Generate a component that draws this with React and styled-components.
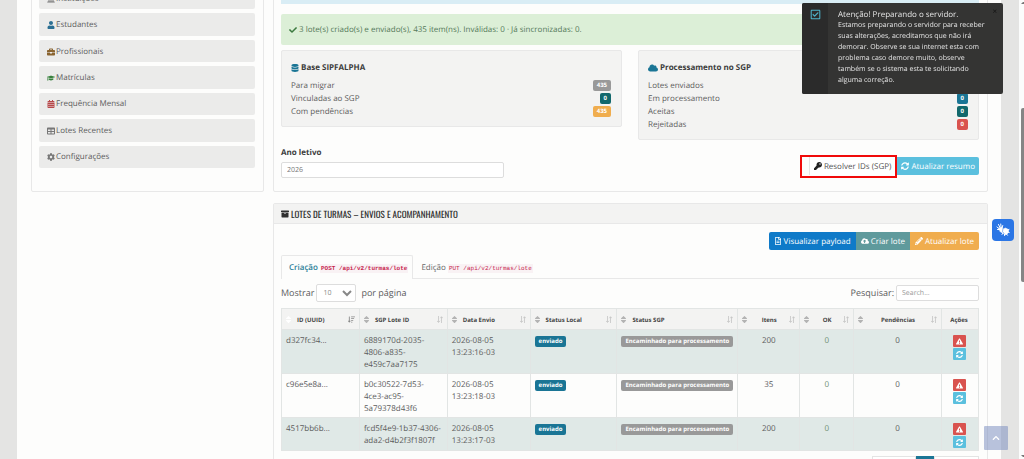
import React from 'react'
import styled, { createGlobalStyle } from 'styled-components'
import {
  FaUser, FaBriefcase, FaGraduationCap, FaCalendarAlt, FaTable, FaCog, FaUniversity,
  FaDatabase, FaCloud, FaKey, FaSyncAlt, FaArchive, FaRegFileAlt, FaCloudUploadAlt,
  FaPencilAlt, FaExclamationTriangle, FaCheck, FaSort, FaRegCheckSquare,
  FaSortAmountDown, FaSignLanguage, FaChevronUp,
} from 'react-icons/fa'

const GlobalStyle = createGlobalStyle`
  * {
    box-sizing: border-box;
  }

  body {
    margin: 0;
    background: #e4e4e3;
    color: #5c5c5c;
    font-family: 'Open Sans', 'Noto Sans', sans-serif;
    font-size: 8px;
    line-height: 12px;
    text-rendering: geometricPrecision;
  }

  button, input, select {
    font-family: inherit;
    font-size: inherit;
    text-rendering: inherit;
  }
`

const Screen = styled.div`
  display: flex;
  height: 100vh;
  overflow: hidden;
`

const Page = styled.main`
  flex: 1;
  min-width: 0;
  margin: 0 18px 0 17px;
  padding: 0 13px 0 14px;
  background: #fdfdfc;
`

const Columns = styled.div`
  display: grid;
  grid-template-columns: 233px 1fr;
  column-gap: 9px;
  row-gap: 11px;
  margin-top: -20px;
`

const Card = styled.section`
  border: 1px solid #e8e8e8;
  border-radius: 2px;
`

const Sidebar = styled(Card)`
  display: flex;
  padding: 6px 8px 23px 7px;
`

const Menu = styled.nav`
  flex: 1;
  display: flex;
  flex-direction: column;
  gap: 4px;
`

const MenuItem = styled.a`
  flex: 1;
  display: flex;
  align-items: center;
  gap: 1px;
  padding: 1px 8px 0;
  border-radius: 2px;
  background: #ebebea;
  color: #5c5c5c;
  text-decoration: none;

  svg {
    font-size: 8px;
    color: ${({ $tint }) => $tint};
  }
`

const Summary = styled(Card)`
  padding: 8px 8px 13px 7px;
`

const InfoBar = styled.div`
  height: 15px;
  background: #d9edf5;
`

const Success = styled.div`
  display: flex;
  align-items: center;
  gap: 2px;
  height: 31px;
  margin: 10px 0 5px;
  padding: 1px 8px 0;
  border-radius: 2px;
  background: #dcefd7;
  color: #55795a;

  svg {
    color: #3c7a40;
  }
`

const Boxes = styled.div`
  display: grid;
  grid-template-columns: 1fr 1fr;
  align-items: start;
  gap: 16px;
`

const Box = styled.section`
  padding: 11px 10px 8px 9px;
  border: 1px solid #e8e8e8;
  border-radius: 2px;
  background: #f3f3f2;
`

const BoxTitle = styled.h2`
  display: flex;
  align-items: center;
  gap: 2px;
  margin: 0 0 5px;
  font-size: 8px;
  color: #3c3c3c;

  svg {
    color: #1a7595;
    font-size: ${({ $icon }) => $icon || 8}px;
  }
`

const Line = styled.div`
  display: flex;
  align-items: center;
  justify-content: space-between;
  height: 13px;
`

const Badge = styled.span`
  display: inline-block;
  padding: 0 4px;
  border-radius: 2px;
  background: ${({ $bg }) => $bg};
  color: #fff;
  font-size: 6px;
  font-weight: 700;
  line-height: 11px;
  white-space: nowrap;
`

const FormRow = styled.form`
  display: flex;
  justify-content: space-between;
  align-items: flex-end;
  margin-top: 7px;
`

const Field = styled.div`
  width: 32%;

  label {
    display: block;
    margin-bottom: 3px;
    font-weight: 700;
    color: #3c3c3c;
  }
`

const Input = styled.input`
  display: block;
  width: 100%;
  height: 16px;
  padding: 0 5px;
  border: 1px solid #ddd;
  border-radius: 2px;
  background: #fff;
  color: #777;
  font-size: 7px;
  outline: none;

  &::placeholder {
    color: #999;
  }
`

const Actions = styled.div`
  display: flex;
  justify-content: flex-end;
  align-items: flex-start;
`

const Marked = styled.div`
  padding: 0 0 1px 7px;
  border: 2px solid #f00a0a;
`

const Button = styled.button`
  display: inline-flex;
  align-items: center;
  gap: 2px;
  height: 18px;
  padding: 0 5px;
  border: 0;
  border-radius: ${({ $radius }) => $radius || 0};
  background: ${({ $bg }) => $bg};
  color: #fff;
  white-space: nowrap;

  svg {
    font-size: 8px;
  }
`

const PlainButton = styled(Button)`
  padding: 0 4px;
  border-left: 1px solid #e4e4e4;
  background: #fff;
  color: #555;

  svg {
    color: #222;
  }
`

const Refresh = styled(Button)`
  margin-top: 2px;
  padding: 0 4px;
`

const Batches = styled(Card)`
  grid-column: 2;
`

const PanelHeader = styled.header`
  display: flex;
  align-items: center;
  gap: 2px;
  height: 20px;
  padding: 0 7px;
  border-bottom: 1px solid #e8e8e8;
  background: #f3f3f2;
  color: #2f2f2f;

  h2 {
    margin: 0;
    font-family: 'Oswald', 'Roboto Condensed', 'Roboto', sans-serif;
    font-size: 9px;
    font-weight: 400;
  }
`

const PanelBody = styled.div`
  padding: 8px 8px 0 7px;
`

const Tabs = styled.div`
  display: flex;
  height: 24px;
  margin-top: 5px;
  border-bottom: 1px solid #e8e8e8;
`

const Tab = styled.button`
  height: 24px;
  padding: 0 4px 0 7px;
  border: 1px solid ${({ $active }) => ($active ? '#e8e8e8' : 'transparent')};
  border-bottom: 0;
  border-radius: 2px 2px 0 0;
  background: ${({ $active }) => ($active ? '#fdfdfc' : 'transparent')};
  color: ${({ $active }) => ($active ? '#2b8098' : '#666')};
  font-weight: ${({ $active }) => ($active ? 600 : 400)};
  white-space: nowrap;

  code {
    padding: 1px;
    background: #f9f2f4;
    color: #c7254e;
    font-family: 'Liberation Mono', monospace;
    font-size: 6px;
    font-weight: ${({ $active }) => ($active ? 700 : 400)};
  }
`

const Controls = styled.div`
  display: flex;
  align-items: center;
  justify-content: space-between;
  margin: 5px 0 6px;
`

const Control = styled.label`
  display: flex;
  align-items: center;
  gap: 2px;
  font-size: 9px;
  white-space: nowrap;
`

const Select = styled.select`
  width: 40px;
  height: 18px;
  margin-right: 3px;
  padding: 0 2px;
  border: 1px solid #ddd;
  border-radius: 2px;
  background: #fff;
  color: #888;
  font-size: 7px;
`

const Search = styled.div`
  width: 83px;
`

const Table = styled.table`
  width: 100%;
  table-layout: fixed;
  border-collapse: collapse;

  th, td {
    border: 1px solid #e2e5e4;
  }

  th {
    height: 21px;
    padding: 1px 4px 0 2px;
    background: #f3f3f2;
    color: #444;
    font-size: 6px;
    font-weight: 700;
  }

  td {
    padding: 5px 4px 2px;
    vertical-align: top;
  }

  tbody tr:nth-child(odd) td {
    background: #e0e9e7;
  }
`

const Cell = styled.td`
  text-align: ${({ $center }) => ($center ? 'center' : 'left')};
  color: ${({ $tone }) => $tone || 'inherit'};
`

const Heading = styled.div`
  display: flex;
  align-items: center;
  gap: 4px;
  color: #aaa;

  span {
    flex: 1;
    color: #444;
    text-align: ${({ $center }) => ($center ? 'center' : 'left')};
    white-space: nowrap;
  }
`

const Sorter = styled(FaSort)`
  font-size: 9px;
  color: ${({ $off }) => ($off ? '#fff' : '#b3b3b3')};
`

const RowActions = styled.div`
  display: flex;
  flex-direction: column;
  align-items: center;
  gap: 1px;
`

const IconButton = styled.button`
  display: flex;
  align-items: center;
  justify-content: center;
  width: 13px;
  height: 12px;
  padding: 0;
  border: 0;
  border-radius: 1px;
  background: ${({ $bg }) => $bg};
  color: #fff;
  font-size: 7px;
`

const Pager = styled.div`
  display: flex;
  justify-content: flex-end;
  margin-top: 5px;
`

const PagerItem = styled.button`
  width: ${({ $w }) => $w}px;
  height: 18px;
  padding: 0;
  border: 1px solid ${({ $active }) => ($active ? '#1a7595' : '#e4e4e4')};
  background: ${({ $active }) => ($active ? '#1a7595' : '#fff')};
`

const Toast = styled.aside`
  position: fixed;
  top: 3px;
  right: 21px;
  display: flex;
  width: 201px;
  height: 91px;
  border-radius: 2px;
  overflow: hidden;
  background: #343433;
  color: #e4e4e4;
  font-size: 7px;
  line-height: 11px;

  p {
    margin: 0;
    padding: 6px 0 0 10px;
    white-space: nowrap;
  }
`

const ToastTitle = styled.span`
  display: block;
  font-size: 8px;
`

const ToastIcon = styled.div`
  width: 26px;
  padding: 6px 0 0 8px;
  background: #2b2b2b;
  color: #4fb4cc;
  font-size: 11px;
`

const ToastClose = styled.button`
  position: absolute;
  top: 4px;
  right: 6px;
  padding: 0;
  border: 0;
  background: none;
  color: #111;
  font-size: 8px;
  line-height: 10px;
`

const SignLanguage = styled.button`
  position: fixed;
  top: 219px;
  right: 10px;
  display: flex;
  align-items: center;
  justify-content: center;
  width: 22px;
  height: 22px;
  padding: 0;
  border: 0;
  border-radius: 4px;
  background: #2b76e5;
  color: #fff;
`

const ToTop = styled.button`
  position: fixed;
  right: 16px;
  bottom: 9px;
  display: flex;
  align-items: center;
  justify-content: center;
  width: 24px;
  height: 24px;
  padding: 0;
  border: 0;
  border-radius: 1px;
  background: rgba(120, 140, 190, 0.52);
  color: #fff;
  font-size: 8px;
`

const Track = styled.div`
  display: flex;
  flex-direction: column;
  justify-content: space-between;
  align-items: flex-end;
  width: 5px;
  background: #fbfcfc;
`

const Thumb = styled.div`
  width: 3px;
  height: 38%;
  margin-bottom: 69px;
  border-radius: 2px 0 0 2px;
  background: #858585;
`

const Arrow = styled.div`
  width: 3px;
  border: 2px solid transparent;
  border-right-width: 0;
  border-${({ $down }) => ($down ? 'top' : 'bottom')}-color: #777;
`

const menu = [
  { label: 'Instituições', icon: FaUniversity, tint: '#777' },
  { label: 'Estudantes', icon: FaUser, tint: '#2b6f93' },
  { label: 'Profissionais', icon: FaBriefcase, tint: '#8a6430' },
  { label: 'Matrículas', icon: FaGraduationCap, tint: '#37803c' },
  { label: 'Frequência Mensal', icon: FaCalendarAlt, tint: '#b8494b' },
  { label: 'Lotes Recentes', icon: FaTable, tint: '#777' },
  { label: 'Configurações', icon: FaCog, tint: '#777' },
]

const base = [
  ['Para migrar', '435', '#999'],
  ['Vinculadas ao SGP', '0', '#12686c'],
  ['Com pendências', '435', '#f0ad4e'],
]

const processing = [
  ['Lotes enviados', '3', '#999'],
  ['Em processamento', '0', '#1a7595'],
  ['Aceitas', '0', '#12686c'],
  ['Rejeitadas', '0', '#d9534f'],
]

const columns = [
  { label: 'ID (UUID)', width: 78, sorted: true },
  { label: 'SGP Lote ID', width: 88 },
  { label: 'Data Envio', width: 83 },
  { label: 'Status Local', width: 87 },
  { label: 'Status SGP', width: 121 },
  { label: 'Itens', width: 62, center: true },
  { label: 'OK', width: 54, center: true },
  { label: 'Pendências', width: 88, center: true },
  { label: 'Ações', width: 37, plain: true },
]

const total = columns.reduce((sum, c) => sum + c.width, 0)

const rows = [
  { id: 'd327fc34...', lote: ['6889170d-2035-', '4806-a835-', 'e459c7aa7175'], time: '13:23:16-03', items: 200 },
  { id: 'c96e5e8a...', lote: ['b0c30522-7d53-', '4ce3-ac95-', '5a79378d43f6'], time: '13:23:18-03', items: 35 },
  { id: '4517bb6b...', lote: ['fcd5f4e9-1b37-4306-', 'ada2-d4b2f3f1807f'], time: '13:23:17-03', items: 200 },
]

const SortArrows = () => (
  <svg width="6" height="7" viewBox="0 0 6 7" fill="none" stroke="#c4c4c4">
    <path d="M1.5 0v6M0 4.8l1.5 1.7L3 4.8M4.5 7V1M3.4 2.2L4.5.7l1.3 1.5" strokeWidth="0.8" />
  </svg>
)

// Two signing hands, the left one open and the right one turned down
const Hands = () => (
  <svg width="14" height="14" viewBox="0 0 28 28" fill="none" stroke="#fff" strokeLinecap="round">
    <path d="M6 11L2 8M8 9L5 3M10 8L9.500 2M12 10l1.500-5M8 13L3 13" strokeWidth="2" />
    <path d="M6 10l6-2 3 5-2 7-5-3z" fill="#fff" strokeWidth="1" />
    <path d="M14 12l5-2 6 3v6l-5 5-7-4z" fill="#fff" strokeWidth="1" />
    <path d="M24 14l2-1M24 18l2.500 1M21 22l2 2.500M17 22l0 3M14 20l-2 3" strokeWidth="2" />
    <path d="M14 11l-1 6 3 4" stroke="#2b76e5" strokeWidth="1" />
  </svg>
)

const InfoBox = ({ title, icon, iconSize, lines }) => (
  <Box>
    <BoxTitle $icon={iconSize}>{icon}{title}</BoxTitle>
    {lines.map(([label, value, color]) => (
      <Line key={label}>
        <span>{label}</span>
        <Badge $bg={color}>{value}</Badge>
      </Line>
    ))}
  </Box>
)

const BatchTable = () => (
  <Table>
    <colgroup>
      {columns.map((c) => (
        <col key={c.label} style={{ width: `${(c.width / total) * 100}%` }} />
      ))}
    </colgroup>
    <thead>
      <tr>
        {columns.map((c) => (
          <th key={c.label}>
            {c.plain ? c.label : (
              <Heading $center={c.center}>
                <Sorter $off={c.sorted} />
                <span>{c.label}</span>
                {c.sorted ? <FaSortAmountDown size={7} color="#888" /> : <SortArrows />}
              </Heading>
            )}
          </th>
        ))}
      </tr>
    </thead>
    <tbody>
      {rows.map((row) => (
        <tr key={row.id}>
          <Cell>{row.id}</Cell>
          <Cell>
            {row.lote.map((part) => <div key={part}>{part}</div>)}
          </Cell>
          <Cell>2026-08-05<br />{row.time}</Cell>
          <Cell><Badge $bg="#1a7595">enviado</Badge></Cell>
          <Cell><Badge $bg="#999">Encaminhado para processamento</Badge></Cell>
          <Cell $center>{row.items}</Cell>
          <Cell $center $tone="#6f8f74">0</Cell>
          <Cell $center>0</Cell>
          <Cell>
            <RowActions>
              <IconButton $bg="#d9534f" aria-label="Pendências"><FaExclamationTriangle /></IconButton>
              <IconButton $bg="#5bc0de" aria-label="Atualizar"><FaSyncAlt /></IconButton>
            </RowActions>
          </Cell>
        </tr>
      ))}
    </tbody>
  </Table>
)

const App = () => {
  return (
    <Screen>
      <GlobalStyle />
      <Page>
        <Columns>
          <Sidebar>
            <Menu>
              {menu.map(({ label, icon: Icon, tint }) => (
                <MenuItem key={label} href="#" $tint={tint}>
                  <Icon />
                  {label}
                </MenuItem>
              ))}
            </Menu>
          </Sidebar>

          <Summary>
            <InfoBar />
            <Success>
              <FaCheck />
              3 lote(s) criado(s) e enviado(s), 435 item(ns). Inválidas: 0 · Já sincronizadas: 0.
            </Success>
            <Boxes>
              <InfoBox title="Base SIPFALPHA" icon={<FaDatabase />} lines={base} />
              <InfoBox title="Processamento no SGP" icon={<FaCloud />} iconSize={10} lines={processing} />
            </Boxes>
            <FormRow>
              <Field>
                <label htmlFor="ano">Ano letivo</label>
                <Input id="ano" defaultValue="2026" />
              </Field>
              <Actions>
                <Marked>
                  <PlainButton type="button"><FaKey />Resolver IDs (SGP)</PlainButton>
                </Marked>
                <Refresh type="button" $bg="#5bc0de" $radius="0 2px 2px 0">
                  <FaSyncAlt />Atualizar resumo
                </Refresh>
              </Actions>
            </FormRow>
          </Summary>

          <Batches>
            <PanelHeader>
              <FaArchive />
              <h2>LOTES DE TURMAS – ENVIOS E ACOMPANHAMENTO</h2>
            </PanelHeader>
            <PanelBody>
              <Actions>
                <Button $bg="#0f7ac8" $radius="2px 0 0 2px"><FaRegFileAlt />Visualizar payload</Button>
                <Button $bg="#5f9a9c"><FaCloudUploadAlt />Criar lote</Button>
                <Button $bg="#f0ad4e" $radius="0 2px 2px 0"><FaPencilAlt />Atualizar lote</Button>
              </Actions>
              <Tabs role="tablist">
                <Tab role="tab" aria-selected="true" $active>Criação <code>POST /api/v2/turmas/lote</code></Tab>
                <Tab role="tab" aria-selected="false">Edição <code>PUT /api/v2/turmas/lote</code></Tab>
              </Tabs>
              <Controls>
                <Control>
                  Mostrar
                  <Select defaultValue="10">
                    <option>10</option>
                  </Select>
                  por página
                </Control>
                <Control>
                  Pesquisar:
                  <Search>
                    <Input placeholder="Search..." />
                  </Search>
                </Control>
              </Controls>
              <BatchTable />
              <Pager>
                <PagerItem $w={44} aria-label="Anterior" />
                <PagerItem $w={18} $active aria-label="Página 1" />
                <PagerItem $w={45} aria-label="Próxima" />
              </Pager>
            </PanelBody>
          </Batches>
        </Columns>
      </Page>

      <Track>
        <Arrow />
        <Thumb />
        <Arrow $down />
      </Track>

      <Toast>
        <ToastIcon><FaRegCheckSquare /></ToastIcon>
        <p>
          <ToastTitle>Atenção! Preparando o servidor.</ToastTitle>
          Estamos preparando o servidor para receber<br />
          suas alterações, acreditamos que não irá<br />
          demorar. Observe se sua internet esta com<br />
          problema caso demore muito, observe<br />
          também se o sistema esta te solicitando<br />
          alguma correção.
        </p>
        <ToastClose aria-label="Fechar">×</ToastClose>
      </Toast>
      <SignLanguage aria-label="Libras"><Hands /></SignLanguage>
      <ToTop aria-label="Voltar ao topo"><FaChevronUp /></ToTop>
    </Screen>
  )
}

export default App
